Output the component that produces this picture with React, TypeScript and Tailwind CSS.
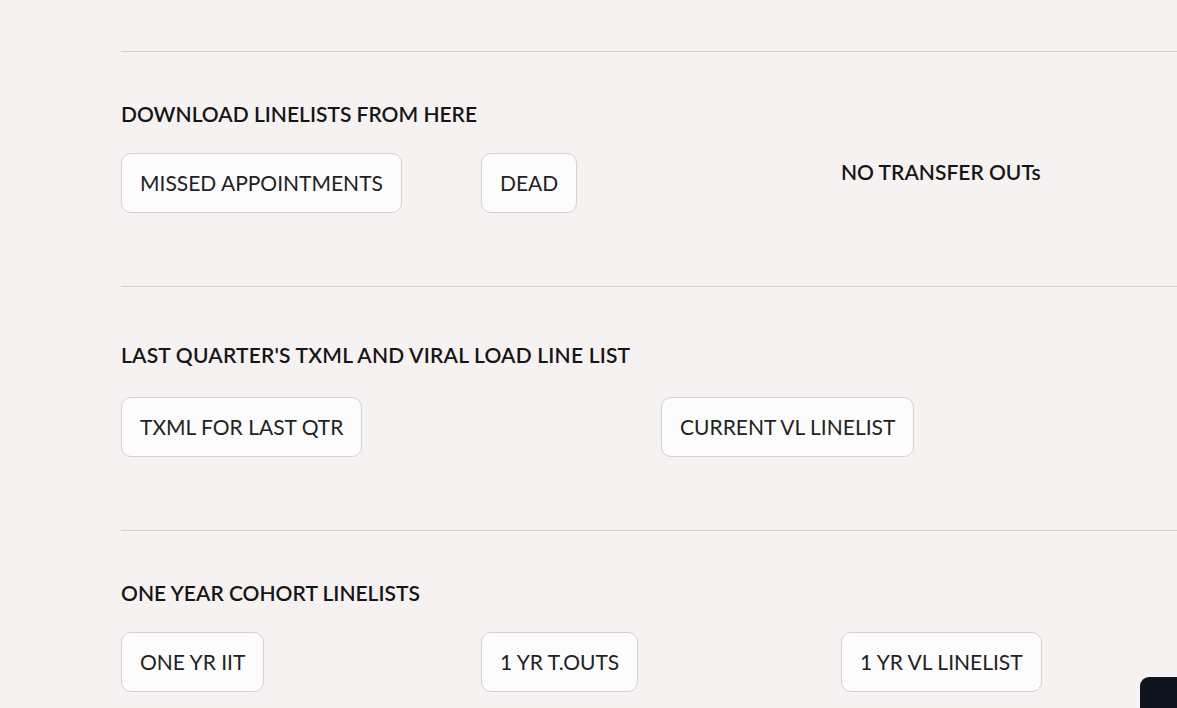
const font = { fontFamily: 'Lato, "Noto Sans", sans-serif' };

function LineButton({ label }: { label: string }) {
  return (
    <button className="h-[60px] px-[18px] rounded-[10px] border border-[#d5d0d0] bg-[#fcfcfc] text-[21px] font-normal text-[#222222] whitespace-nowrap">
      {label}
    </button>
  );
}

export default function App() {
  return (
    <div className="relative h-[708px] w-full overflow-hidden bg-[#f7f2f2] text-[#161616]" style={font}>
      <div className="ml-[121px] w-[1080px] pt-[51px]">
        {/* Download linelists */}
        <hr className="border-t border-[#d6d0d0]" />
        <h2 className="mt-[49px] text-[21px] font-semibold leading-[26px]">DOWNLOAD LINELISTS FROM HERE</h2>
        <div className="mt-[26px] grid grid-cols-3 items-start">
          <div><LineButton label="MISSED APPOINTMENTS" /></div>
          <div><LineButton label="DEAD" /></div>
          <div className="pt-[6px] text-[21px] font-semibold leading-[26px]">NO TRANSFER OUTs</div>
        </div>

        {/* Last quarter */}
        <hr className="mt-[73px] border-t border-[#d6d0d0]" />
        <h2 className="mt-[55px] text-[21px] font-semibold leading-[26px] tracking-[0.2px]">LAST QUARTER'S TXML AND VIRAL LOAD LINE LIST</h2>
        <div className="mt-[29px] grid grid-cols-2 items-start">
          <div><LineButton label="TXML FOR LAST QTR" /></div>
          <div><LineButton label="CURRENT VL LINELIST" /></div>
        </div>

        {/* One year cohort */}
        <hr className="mt-[73px] border-t border-[#d6d0d0]" />
        <h2 className="mt-[49px] text-[21px] font-semibold leading-[26px]">ONE YEAR COHORT LINELISTS</h2>
        <div className="mt-[26px] grid grid-cols-3 items-start">
          <div><LineButton label="ONE YR IIT" /></div>
          <div><LineButton label="1 YR T.OUTS" /></div>
          <div><LineButton label="1 YR VL LINELIST" /></div>
        </div>
      </div>

      <div className="absolute left-[1140px] top-[677px] h-[60px] w-[60px] rounded-[9px] bg-[#0f131b]" />
    </div>
  );
}
